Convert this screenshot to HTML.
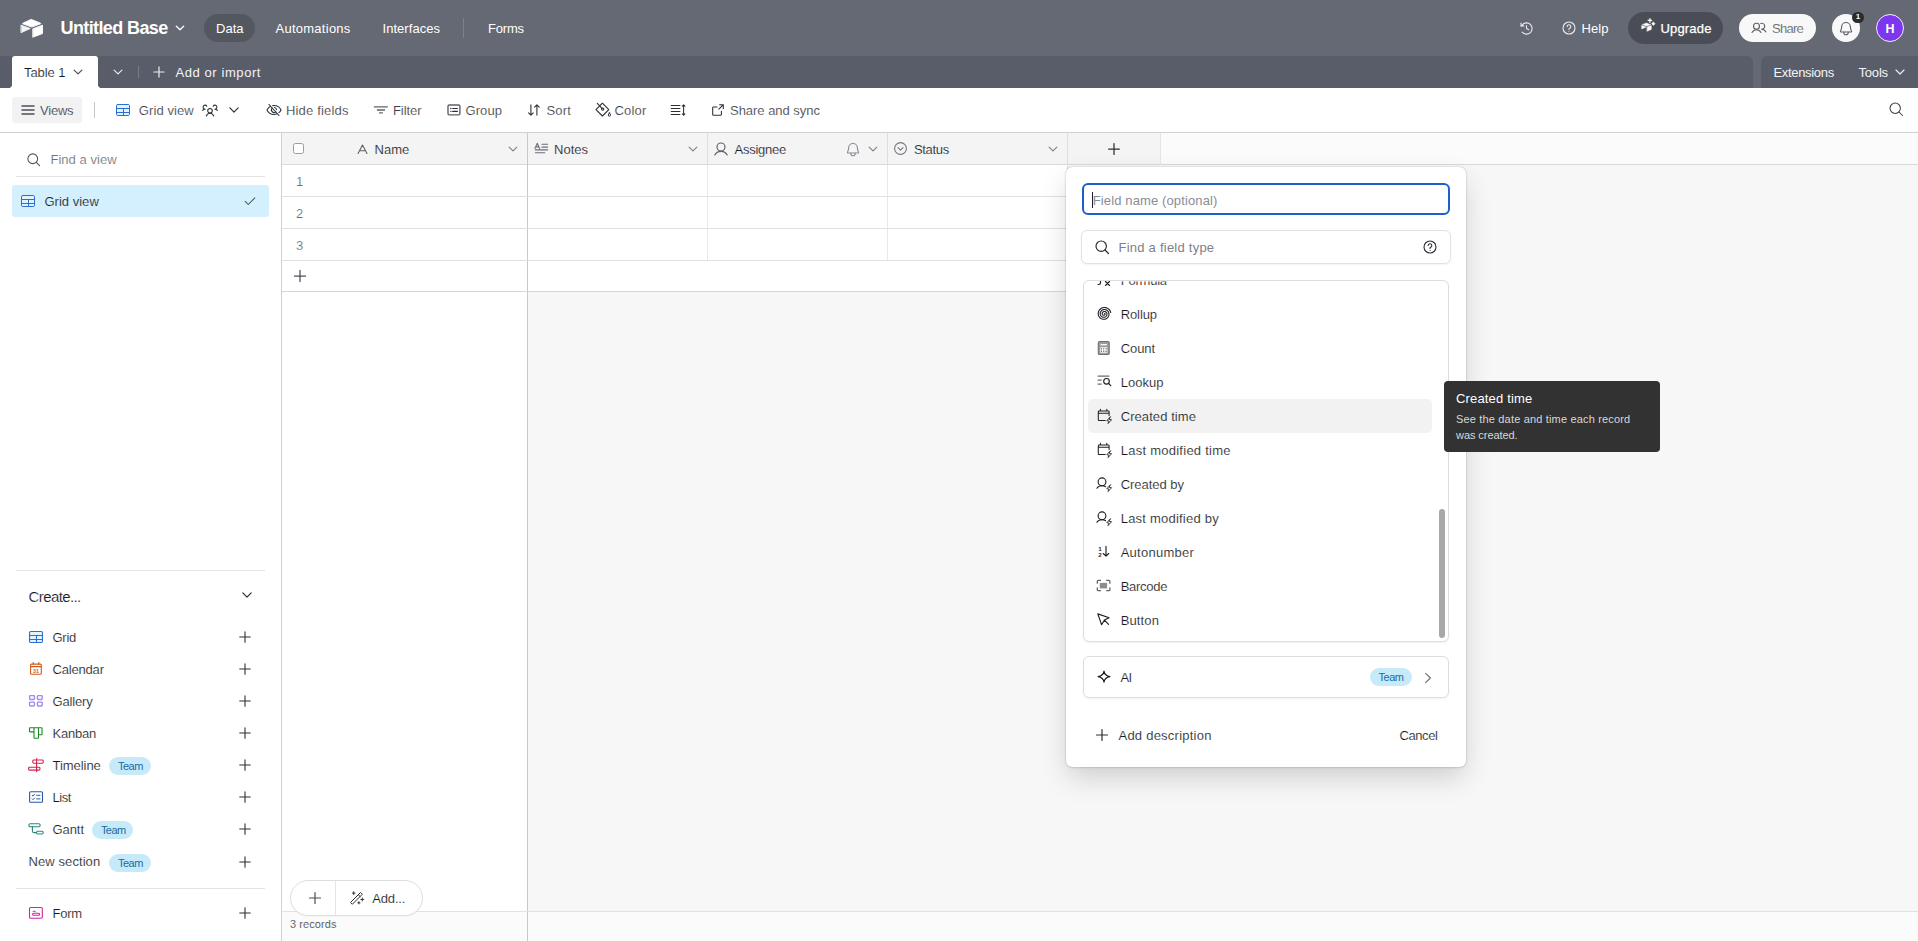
<!DOCTYPE html>
<html lang="en"><head><meta charset="utf-8"><title>Untitled Base - Airtable</title>
<style>
html,body{margin:0;padding:0;background:#fff;}
body{width:1918px;height:941px;overflow:hidden;font-family:"Liberation Sans",sans-serif;}
#app{position:relative;width:1918px;height:941px;overflow:hidden;background:#f7f7f7;}
#app div{position:absolute;box-sizing:border-box;}
.t{position:absolute;white-space:nowrap;line-height:20px;height:20px;}
.i{position:absolute;overflow:visible;stroke-linecap:round;stroke-linejoin:round;stroke-width:1.25;}

</style></head>
<body>
<div id="app">
<div style="left:0px;top:0px;width:1918px;height:88px;background:#646973;"></div>
<svg class="i" style="left:20px;top:18px;color:#ffffff;" width="24" height="20" viewBox="0 0 24 20" fill="none" stroke="currentColor"><g stroke="currentColor" stroke-width=".9" stroke-linejoin="round" fill="currentColor"><path d="M11.5 1.5 20.6 5.2c.3.12.3.5 0 .62L11.9 9.000 2.800 5.800c-.3-.12-.3-.5 0-.62z"/><path d="M13.100 10.700 22.500 7.200v8.400l-9.400 3.500z"/><path d="M1.300 7.200 10.300 10.500 1.300 14.600z" opacity=".92"/></g></svg>
<svg class="i" style="left:172px;top:20px;color:#ffffff;stroke-width:1.3" width="16" height="16" viewBox="-8 -8 16 16" fill="none" stroke="currentColor"><path d="M-3.65 -1.82L0 1.82L3.65 -1.82"/></svg>
<div style="left:204px;top:14px;width:51px;height:28px;background:rgba(0,0,0,.16);border-radius:14px;"></div>
<div style="left:463px;top:18px;width:1px;height:20px;background:rgba(255,255,255,.16);"></div>
<svg class="i" style="left:1519.2px;top:20.6px;color:#eceef0;stroke-width:1.15;" width="15" height="15" viewBox="0 0 16 16" fill="none" stroke="currentColor"><path d="M8 5v3l2.5 1.5"/><path d="M2.2 5.2v-3M2.2 5.2h3"/><path d="M3.4 11.9a6 6 0 1 0 0-7.8L2.3 5.2"/></svg>
<svg class="i" style="left:1561px;top:20px;color:#eceef0;stroke-width:1.1;" width="16" height="16" viewBox="0 0 16 16" fill="none" stroke="currentColor"><circle cx="8" cy="8" r="6"/><path d="M6.2 6.5a1.8 1.8 0 1 1 2.5 1.7c-.4.2-.7.5-.7 1v.3"/><circle cx="8" cy="11.3" r=".55" fill="currentColor" stroke="none"/></svg>
<div style="left:1628px;top:12px;width:95px;height:32px;background:rgba(0,0,0,.26);border-radius:16px;"></div>
<svg class="i" style="left:1640.8px;top:18.2px;color:#ffffff;" width="15" height="15" viewBox="0 0 16 16" fill="none" stroke="currentColor"><g stroke="currentColor" stroke-width=".5" stroke-linejoin="round" fill="currentColor"><path d="M5.900 5.400 10.200 7.100 6 8.600 1.700 7.100Z"/><path d="M6.600 9.600 11 8V12.200L6.600 14Z"/><path d="M.9 8 5.300 9.500.9 11.600Z"/><path d="M13.200 4.300 15 6.100 13.200 7.900 11.400 6.100Z"/></g><path d="M9.500 .2V5M7.100 2.600H11.900" stroke-width="1.400" stroke-linecap="butt"/></svg>
<div style="left:1738.8px;top:13.8px;width:77.5px;height:28.3px;background:#f8f8f8;border-radius:14.2px;"></div>
<svg class="i" style="left:1751.2px;top:20px;color:#5d6169;stroke-width:1.1;" width="16" height="16" viewBox="0 0 16 16" fill="none" stroke="currentColor"><circle cx="5.5" cy="6.2" r="3"/><path d="M1 12.5c1-1.8 2.6-2.8 4.5-2.8s3.500 1 4.500 2.800"/><path d="M9.700 3.400a3 3 0 1 1 .8 5.800c1.900 0 3.500 1 4.500 2.800"/></svg>
<div style="left:1831.9px;top:13.8px;width:28.2px;height:28.3px;background:#f8f8f8;border-radius:14.2px;"></div>
<svg class="i" style="left:1837.15px;top:19.3px;color:#5d6169;stroke-width:1;" width="18" height="18" viewBox="0 0 16 16" fill="none" stroke="currentColor"><path d="M3.500 11.500c-.3 0-.6-.4-.4-.7.500-.9 1-2.200 1-3.800a3.900 3.900 0 0 1 7.800 0c0 1.600.5 2.900 1 3.800.2.300-.1.700-.4.700z"/><path d="M6 11.700v.3a2 2 0 0 0 4 0v-.3"/></svg>
<div style="left:1852px;top:11.8px;width:12.1px;height:11.3px;background:#292b30;border-radius:6px;"></div>
<div style="left:1875.9px;top:13.8px;width:28.3px;height:28.3px;background:#7c37ef;border-radius:14.2px;border:1px solid #f4ecff;"></div>
<div style="left:0px;top:56px;width:1753px;height:32px;background:#585d69;border-radius:0 6px 0 0;"></div>
<div style="left:1761px;top:56px;width:157px;height:32px;background:#585d69;border-radius:6px 0 0 0;"></div>
<div style="left:12px;top:56px;width:86px;height:32px;background:#fff;border-radius:3px 3px 0 0;"></div>
<div style="left:8px;top:84px;width:4px;height:4px;background:radial-gradient(circle at 0 0,#585d69 4px,#fff 4.5px);"></div>
<div style="left:98px;top:84px;width:4px;height:4px;background:radial-gradient(circle at 100% 0,#585d69 4px,#fff 4.5px);"></div>
<svg class="i" style="left:70.1px;top:64.2px;color:#4a4f58;stroke-width:1.2" width="16" height="16" viewBox="-8 -8 16 16" fill="none" stroke="currentColor"><path d="M-3.90 -1.95L0 1.95L3.90 -1.95"/></svg>
<svg class="i" style="left:110px;top:64.2px;color:#e9eaed;stroke-width:1.2" width="16" height="16" viewBox="-8 -8 16 16" fill="none" stroke="currentColor"><path d="M-3.90 -1.95L0 1.95L3.90 -1.95"/></svg>
<div style="left:138px;top:66px;width:1px;height:12px;background:rgba(255,255,255,.2);"></div>
<svg class="i" style="left:151px;top:64px;color:#eceef0;stroke-width:1.2" width="16" height="16" viewBox="-8 -8 16 16" fill="none" stroke="currentColor"><path d="M-5.10 0H5.10M0 -5.10V5.10"/></svg>
<svg class="i" style="left:1892.1px;top:64.2px;color:#e9eaed;stroke-width:1.2" width="16" height="16" viewBox="-8 -8 16 16" fill="none" stroke="currentColor"><path d="M-4.00 -2.00L0 2.00L4.00 -2.00"/></svg>
<div style="left:0px;top:88px;width:1918px;height:44px;background:#fff;"></div>
<div style="left:0px;top:132px;width:1918px;height:1px;background:#d1d1d1;"></div>
<div style="left:12px;top:97px;width:70px;height:25.5px;background:#f2f2f2;border-radius:3px;"></div>
<svg class="i" style="left:20px;top:102px;color:#4a4f58;" width="16" height="16" viewBox="0 0 16 16" fill="none" stroke="currentColor"><path d="M2 4h12M2 8h12M2 12h12" stroke-width="1.500"/></svg>
<div style="left:94px;top:102px;width:1px;height:16px;background:#c4c6cb;"></div>
<svg class="i" style="left:115px;top:102px;color:#2a6fd6;stroke-width:1;" width="16" height="16" viewBox="0 0 16 16" fill="none" stroke="currentColor"><rect x="1.5" y="2.5" width="13" height="11" rx="1.2" fill="#e3f2ff"/><path d="M1.5 6.500H14.500M1.500 10.500H14.500M8.500 6.500V13.500"/></svg>
<svg class="i" style="left:202px;top:102px;color:#2c2f36;stroke-width:1.05;" width="16" height="16" viewBox="0 0 16 16" fill="none" stroke="currentColor"><circle cx="8" cy="8.700" r="2.300"/><path d="M4.300 14c.7-1.700 2-2.700 3.700-2.700s3 1 3.700 2.700"/><path d="M11.200 4.200a2 2 0 1 1 1.700 3c1 0 1.900.4 2.500 1.200"/><path d="M4.800 4.200a2 2 0 1 0-1.700 3c-1 0-1.900.4-2.500 1.200"/></svg>
<svg class="i" style="left:225.9px;top:102.3px;color:#2c2f36;stroke-width:1.2" width="16" height="16" viewBox="-8 -8 16 16" fill="none" stroke="currentColor"><path d="M-4.10 -2.05L0 2.05L4.10 -2.05"/></svg>
<svg class="i" style="left:266px;top:102px;color:#2c2f36;stroke-width:1.08;" width="16" height="16" viewBox="0 0 16 16" fill="none" stroke="currentColor"><path d="M3 2.500 13 13.500"/><path d="M9.700 9.800a2.500 2.500 0 0 1-3.400-3.700"/><path d="M4.600 4.300C2.100 5.600 1 8 1 8s2 4.500 7 4.500c1.200 0 2.200-.25 3.100-.65"/><path d="M13 10.600c1.400-1.200 2-2.600 2-2.600s-2-4.500-7-4.500c-.4 0-.85.030-1.250.100"/><path d="M8.500 5.550a2.500 2.500 0 0 1 2 2.200"/></svg>
<svg class="i" style="left:373px;top:102px;color:#2c2f36;stroke-width:1.08;" width="16" height="16" viewBox="0 0 16 16" fill="none" stroke="currentColor"><path d="M.9 4.800H14.800M3.900 8H12M6.100 10.900H9.800" stroke="#5d6167" stroke-width="1.350" stroke-linecap="butt"/></svg>
<svg class="i" style="left:446px;top:102px;color:#2c2f36;stroke-width:1.08;" width="16" height="16" viewBox="0 0 16 16" fill="none" stroke="currentColor"><rect x="2" y="3" width="11.900" height="9.900" rx="1.300" stroke="#5d6167" stroke-width="1.400"/><path d="M6.700 6.500H11.400M6.700 9.400H11.400" stroke-width="1.100"/><circle cx="4.900" cy="6.500" r=".7" fill="currentColor" stroke="none"/><circle cx="4.900" cy="9.400" r=".7" fill="currentColor" stroke="none"/></svg>
<svg class="i" style="left:526px;top:102px;color:#2c2f36;stroke-width:1.08;" width="16" height="16" viewBox="0 0 16 16" fill="none" stroke="currentColor"><path d="M4.900 2.900V13M2.600 10.800 4.900 13.100 7.200 10.800M10.900 13.100V3M8.600 5.200 10.900 2.900 13.200 5.200"/></svg>
<svg class="i" style="left:595px;top:102px;color:#2c2f36;stroke-width:1.08;" width="16" height="16" viewBox="0 0 16 16" fill="none" stroke="currentColor"><path d="M7.400 1.200 13.800 7.600 7.400 14 1 7.700Z"/><path d="M2.300 1.400 7 6.400"/><circle cx="7.700" cy="7.100" r="1.150"/><path d="M14.400 10.900c.7.900 1.100 1.600 1.100 2.200a1.100 1.100 0 0 1-2.200 0c0-.6.400-1.300 1.100-2.200z" stroke-width="1"/></svg>
<svg class="i" style="left:670px;top:102px;color:#2c2f36;stroke-width:1.08;" width="16" height="16" viewBox="0 0 16 16" fill="none" stroke="currentColor"><path d="M1.200 3.500H9.900M1.200 6.500H9.900M1.200 9.500H9.900M1.200 12.500H9.900M13.600 2.800V13.200M12.300 4.100 13.600 2.800 14.900 4.100M12.300 11.900 13.600 13.200 14.900 11.900"/></svg>
<svg class="i" style="left:710px;top:102px;color:#2c2f36;stroke-width:1.08;" width="16" height="16" viewBox="0 0 16 16" fill="none" stroke="currentColor"><path d="M9.600 2.700H13.300V6.400M13.300 2.700 8.900 7.100M11.400 9.300V12.400a.8.800 0 0 1-.8.800H3.500a.8.800 0 0 1-.8-.8V5.800a.8.800 0 0 1 .8-.8H7"/></svg>
<svg class="i" style="left:1887.6px;top:101.4px;color:#3a3d44;stroke-width:1.05;" width="16" height="16" viewBox="0 0 16 16" fill="none" stroke="currentColor"><circle cx="7.200" cy="7.200" r="5.200"/><path d="M11 11l3.500 3.500"/></svg>
<div style="left:0px;top:133px;width:281px;height:808px;background:#fff;"></div>
<div style="left:281px;top:133px;width:1px;height:808px;background:#d1d1d1;"></div>
<svg class="i" style="left:26.3px;top:151.5px;color:#50555e;stroke-width:1.15;" width="15" height="15" viewBox="0 0 16 16" fill="none" stroke="currentColor"><circle cx="7.200" cy="7.200" r="5.200"/><path d="M11 11l3.500 3.500"/></svg>
<div style="left:16px;top:176px;width:249px;height:1px;background:#e4e4e4;"></div>
<div style="left:12px;top:185px;width:257px;height:32px;background:#d4f0fe;border-radius:3px;"></div>
<svg class="i" style="left:20px;top:193px;color:#2a6fd6;stroke-width:1;" width="16" height="16" viewBox="0 0 16 16" fill="none" stroke="currentColor"><rect x="1.5" y="2.5" width="13" height="11" rx="1.2" fill="#e3f2ff"/><path d="M1.5 6.500H14.500M1.500 10.500H14.500M8.500 6.500V13.500"/></svg>
<svg class="i" style="left:243px;top:194px;color:#4a4f58;stroke-width:1.2;" width="14" height="14" viewBox="0 0 16 16" fill="none" stroke="currentColor"><path d="M2.5 8.5 6 12l7.5-7.5"/></svg>
<div style="left:16px;top:570px;width:249px;height:1px;background:#e4e4e4;"></div>
<svg class="i" style="left:238.7px;top:587.3px;color:#2c2f36;stroke-width:1.25" width="16" height="16" viewBox="-8 -8 16 16" fill="none" stroke="currentColor"><path d="M-4.17 -2.09L0 2.09L4.17 -2.09"/></svg>
<svg class="i" style="left:28px;top:629px;color:#2a6fd6;stroke-width:1.1;" width="16" height="16" viewBox="0 0 16 16" fill="none" stroke="currentColor"><rect x="1.5" y="2.5" width="13" height="11" rx="1.2" fill="#e3f2ff"/><path d="M1.5 6.500H14.500M1.500 10.500H14.500M8.500 6.500V13.500"/></svg>
<svg class="i" style="left:237px;top:629px;color:#2c2f36;stroke-width:1.1" width="16" height="16" viewBox="-8 -8 16 16" fill="none" stroke="currentColor"><path d="M-5.25 0H5.25M0 -5.25V5.25"/></svg>
<svg class="i" style="left:28px;top:661px;color:#cf5a1c;stroke-width:1.1;" width="16" height="16" viewBox="0 0 16 16" fill="none" stroke="currentColor"><rect x="2.600" y="3.100" width="10.700" height="10.100" rx="1"/><path d="M2.600 5.600H13.300M5.200 1.500V3.100M10.800 1.500V3.100"/><text x="8" y="11.700" text-anchor="middle" font-family="Liberation Sans,sans-serif" font-size="5.200" font-weight="700" fill="currentColor" stroke="none">31</text></svg>
<svg class="i" style="left:237px;top:661px;color:#2c2f36;stroke-width:1.1" width="16" height="16" viewBox="-8 -8 16 16" fill="none" stroke="currentColor"><path d="M-5.25 0H5.25M0 -5.25V5.25"/></svg>
<svg class="i" style="left:28px;top:693px;color:#8a57ee;stroke-width:1.1;" width="16" height="16" viewBox="0 0 16 16" fill="none" stroke="currentColor"><g stroke-width="1.4" stroke="#a68af4"><rect x="1.6" y="2.6" width="4.8" height="3.9" rx=".7"/><rect x="9.4" y="2.6" width="4.8" height="3.9" rx=".7"/><rect x="1.6" y="9.1" width="4.8" height="3.9" rx=".7"/><rect x="9.4" y="9.1" width="4.8" height="3.9" rx=".7"/></g></svg>
<svg class="i" style="left:237px;top:693px;color:#2c2f36;stroke-width:1.1" width="16" height="16" viewBox="-8 -8 16 16" fill="none" stroke="currentColor"><path d="M-5.25 0H5.25M0 -5.25V5.25"/></svg>
<svg class="i" style="left:28px;top:725px;color:#198a25;stroke-width:1.1;" width="16" height="16" viewBox="0 0 16 16" fill="none" stroke="currentColor"><path d="M2.1 2.7H13.400a.6.600 0 0 1 .6.600V9.200a.6.600 0 0 1-.6.600H10.500V12.700a.6.600 0 0 1-.6.600H6.600a.6.600 0 0 1-.6-.6V6.900H2.100a.6.600 0 0 1-.6-.6V3.300a.6.600 0 0 1 .6-.6zM6 2.700V6.900M10.500 2.700V9.800"/></svg>
<svg class="i" style="left:237px;top:725px;color:#2c2f36;stroke-width:1.1" width="16" height="16" viewBox="-8 -8 16 16" fill="none" stroke="currentColor"><path d="M-5.25 0H5.25M0 -5.25V5.25"/></svg>
<svg class="i" style="left:28px;top:757px;color:#d5204f;stroke-width:1.1;" width="16" height="16" viewBox="0 0 16 16" fill="none" stroke="currentColor"><path d="M8.600 1.500V14.800"/><rect x="4.800" y="3" width="10.400" height="3.200" rx=".9"/><rect x=".6" y="10.200" width="11.300" height="2.900" rx=".9"/></svg>
<div style="left:109.1px;top:757.25px;width:41.5px;height:17.5px;background:#c7eafb;border-radius:9px;"></div>
<svg class="i" style="left:237px;top:757px;color:#2c2f36;stroke-width:1.1" width="16" height="16" viewBox="-8 -8 16 16" fill="none" stroke="currentColor"><path d="M-5.25 0H5.25M0 -5.25V5.25"/></svg>
<svg class="i" style="left:28px;top:789px;color:#2759a8;stroke-width:1.1;" width="16" height="16" viewBox="0 0 16 16" fill="none" stroke="currentColor"><rect x="1.600" y="2.800" width="12.900" height="10.400" rx="1"/><path d="M8.700 6.300h3.300M8.700 9.900h3.300M4.200 6.300l.8.800 1.500-1.600M4.200 9.900l.8.800 1.500-1.600" stroke-width="1"/></svg>
<svg class="i" style="left:237px;top:789px;color:#2c2f36;stroke-width:1.1" width="16" height="16" viewBox="-8 -8 16 16" fill="none" stroke="currentColor"><path d="M-5.25 0H5.25M0 -5.25V5.25"/></svg>
<svg class="i" style="left:28px;top:821px;color:#23897a;stroke-width:1.1;" width="16" height="16" viewBox="0 0 16 16" fill="none" stroke="currentColor"><rect x=".9" y="2.800" width="11.200" height="3" rx="1.200"/><rect x="8.500" y="10.200" width="6.700" height="2.800" rx="1.200"/><path d="M4.400 5.800v4.300a1.500 1.500 0 0 0 1.500 1.500h2.600"/></svg>
<div style="left:91.9px;top:821.25px;width:41.5px;height:17.5px;background:#c7eafb;border-radius:9px;"></div>
<svg class="i" style="left:237px;top:821px;color:#2c2f36;stroke-width:1.1" width="16" height="16" viewBox="-8 -8 16 16" fill="none" stroke="currentColor"><path d="M-5.25 0H5.25M0 -5.25V5.25"/></svg>
<div style="left:109.1px;top:854.25px;width:41.5px;height:17.5px;background:#c7eafb;border-radius:9px;"></div>
<svg class="i" style="left:237px;top:854px;color:#2c2f36;stroke-width:1.1" width="16" height="16" viewBox="-8 -8 16 16" fill="none" stroke="currentColor"><path d="M-5.25 0H5.25M0 -5.25V5.25"/></svg>
<svg class="i" style="left:28px;top:905px;color:#d322a4;stroke-width:1.1;" width="16" height="16" viewBox="0 0 16 16" fill="none" stroke="currentColor"><rect x="1.5" y="2.5" width="12.8" height="10.8" rx="1.2"/><path d="M5.100 6.200H7.300"/><rect x="4.600" y="8.300" width="7" height="2" rx="1"/></svg>
<svg class="i" style="left:237px;top:905px;color:#2c2f36;stroke-width:1.1" width="16" height="16" viewBox="-8 -8 16 16" fill="none" stroke="currentColor"><path d="M-5.25 0H5.25M0 -5.25V5.25"/></svg>
<div style="left:16px;top:888px;width:249px;height:1px;background:#e4e4e4;"></div>
<div style="left:282px;top:133px;width:1636px;height:32px;background:#fbfbfb;"></div>
<div style="left:282px;top:133px;width:879px;height:31px;background:#f4f4f4;"></div>
<div style="left:282px;top:164px;width:1636px;height:1px;background:#d9d9d9;"></div>
<div style="left:282px;top:165px;width:246px;height:776px;background:#fff;"></div>
<div style="left:528px;top:165px;width:540px;height:127px;background:#fff;"></div>
<div style="left:527px;top:133px;width:1px;height:808px;background:#c8c8c8;"></div>
<div style="left:707px;top:133px;width:1px;height:32px;background:#dedede;"></div>
<div style="left:707px;top:165px;width:1px;height:96px;background:#e8e8e8;"></div>
<div style="left:887px;top:133px;width:1px;height:32px;background:#dedede;"></div>
<div style="left:887px;top:165px;width:1px;height:96px;background:#e8e8e8;"></div>
<div style="left:1067px;top:133px;width:1px;height:159px;background:#dedede;"></div>
<div style="left:1160px;top:133px;width:1px;height:32px;background:#e6e6e6;"></div>
<div style="left:282px;top:196px;width:786px;height:1px;background:#e0e0e0;"></div>
<div style="left:282px;top:228px;width:786px;height:1px;background:#e0e0e0;"></div>
<div style="left:282px;top:260px;width:786px;height:1px;background:#e0e0e0;"></div>
<div style="left:282px;top:291px;width:786px;height:1px;background:#d6d6d6;"></div>
<div style="left:293px;top:143px;width:11px;height:11px;background:#fff;border:1px solid #9a9da3;border-radius:2.5px;"></div>
<svg class="i" style="left:355.5px;top:142.6px;color:#5b5f66;stroke-width:1.3;" width="13" height="13" viewBox="0 0 16 16" fill="none" stroke="currentColor"><path d="M2.500 13 8 2.500 13.500 13M4.300 9.500h7.400"/></svg>
<svg class="i" style="left:504.9px;top:140.8px;color:#7d8087;stroke-width:1.1" width="16" height="16" viewBox="-8 -8 16 16" fill="none" stroke="currentColor"><path d="M-3.85 -1.93L0 1.93L3.85 -1.93"/></svg>
<svg class="i" style="left:533.5px;top:141.3px;color:#6a6e75;stroke-width:1.15;" width="15" height="15" viewBox="0 0 16 16" fill="none" stroke="currentColor"><path d="M1 8 3.500 2.500 6 8M1.800 6.300h3.400M8.500 3.500h6M8.500 6.500h6M1.500 9.500h13M1.500 12.500h10"/></svg>
<svg class="i" style="left:684.5px;top:140.8px;color:#7d8087;stroke-width:1.1" width="16" height="16" viewBox="-8 -8 16 16" fill="none" stroke="currentColor"><path d="M-3.85 -1.93L0 1.93L3.85 -1.93"/></svg>
<svg class="i" style="left:712.9px;top:140.9px;color:#5b5f66;stroke-width:1.15;" width="16" height="16" viewBox="0 0 16 16" fill="none" stroke="currentColor"><circle cx="8" cy="6" r="4"/><path d="M1.800 14c1.300-2.500 3.500-3.700 6.200-3.700s4.900 1.200 6.200 3.700"/></svg>
<svg class="i" style="left:843.9px;top:139.5px;color:#8a8d93;stroke-width:1;" width="18" height="18" viewBox="0 0 16 16" fill="none" stroke="currentColor"><path d="M3.500 11.500c-.3 0-.6-.4-.4-.7.500-.9 1-2.200 1-3.800a3.900 3.900 0 0 1 7.800 0c0 1.600.5 2.900 1 3.800.2.300-.1.700-.4.700z"/><path d="M6 11.700v.3a2 2 0 0 0 4 0v-.3"/></svg>
<svg class="i" style="left:865px;top:140.8px;color:#7d8087;stroke-width:1.1" width="16" height="16" viewBox="-8 -8 16 16" fill="none" stroke="currentColor"><path d="M-3.85 -1.93L0 1.93L3.85 -1.93"/></svg>
<svg class="i" style="left:893.25px;top:141.4px;color:#73777e;stroke-width:1.15;" width="15" height="15" viewBox="0 0 16 16" fill="none" stroke="currentColor"><circle cx="8" cy="8" r="6.300"/><path d="M5.300 7 8 9.700 10.700 7"/></svg>
<svg class="i" style="left:1044.5px;top:140.8px;color:#7d8087;stroke-width:1.1" width="16" height="16" viewBox="-8 -8 16 16" fill="none" stroke="currentColor"><path d="M-3.85 -1.93L0 1.93L3.85 -1.93"/></svg>
<svg class="i" style="left:1105.7px;top:141px;color:#2c2f36;stroke-width:1.25" width="16" height="16" viewBox="-8 -8 16 16" fill="none" stroke="currentColor"><path d="M-5.38 0H5.38M0 -5.38V5.38"/></svg>
<svg class="i" style="left:292px;top:267.5px;color:#4a4f58;stroke-width:1.25" width="16" height="16" viewBox="-8 -8 16 16" fill="none" stroke="currentColor"><path d="M-5.58 0H5.58M0 -5.58V5.58"/></svg>
<div style="left:282px;top:911px;width:1636px;height:1px;background:#e2e2e2;"></div>
<div style="left:282px;top:912px;width:245px;height:29px;background:#fbfbfb;"></div>
<div style="left:528px;top:912px;width:1390px;height:29px;background:#fbfbfb;"></div>
<div style="left:290.3px;top:880px;width:132.7px;height:35.7px;background:#fff;border:1px solid #dedede;border-radius:18px;box-shadow:0 1px 2px rgba(0,0,0,.03);"></div>
<div style="left:335px;top:881px;width:1px;height:34px;background:#e4e4e4;"></div>
<svg class="i" style="left:306.9px;top:889.9px;color:#4a4d53;stroke-width:1.2" width="16" height="16" viewBox="-8 -8 16 16" fill="none" stroke="currentColor"><path d="M-5.50 0H5.50M0 -5.50V5.50"/></svg>
<svg class="i" style="left:348.5px;top:890px;color:#2c2f36;" width="16" height="16" viewBox="0 0 16 16" fill="none" stroke="currentColor"><path d="M1.800 12.200 11.600 2.400 13.400 4.200 3.600 14ZM9.300 4.700 11.100 6.500" stroke-width="1"/><path d="M4.700 1.700V4.500M3.300 3.100H6.100M13.300 8V11M11.800 9.500H14.800M9.900 11.700V13.900M8.800 12.800H11" stroke-width=".95"/></svg>
<div style="left:1066px;top:167px;width:400px;height:600px;background:#fff;border-radius:6px;box-shadow:0 0 1px rgba(0,0,0,.32),0 0 2px rgba(0,0,0,.08),0 1px 3px rgba(0,0,0,.08),0 12px 28px -2px rgba(0,0,0,.17);"></div>
<div style="left:1082px;top:183px;width:368px;height:32px;background:#fff;border:2px solid #1b61c9;border-radius:6px;"></div>
<div style="left:1092px;top:191.5px;width:1px;height:16.5px;background:#1d1f25;"></div>
<div style="left:1081px;top:230px;width:370px;height:34px;background:#fff;border:1px solid #e0e2e5;border-radius:6px;box-shadow:0 1px 2px rgba(0,0,0,.05);"></div>
<svg class="i" style="left:1094px;top:239px;color:#2c2f36;stroke-width:1.2;" width="16" height="16" viewBox="0 0 16 16" fill="none" stroke="currentColor"><circle cx="7.200" cy="7.200" r="5.200"/><path d="M11 11l3.500 3.500"/></svg>
<svg class="i" style="left:1422.3px;top:239px;color:#2c2f36;stroke-width:1.1;" width="16" height="16" viewBox="0 0 16 16" fill="none" stroke="currentColor"><circle cx="8" cy="8" r="6"/><path d="M6.2 6.5a1.8 1.8 0 1 1 2.5 1.7c-.4.2-.7.5-.7 1v.3"/><circle cx="8" cy="11.3" r=".55" fill="currentColor" stroke="none"/></svg>
<div style="left:1083px;top:280px;width:366px;height:362px;background:#fff;border:1px solid #dcdee2;border-radius:6px;box-shadow:0 1px 2px rgba(0,0,0,.06);"></div>
<div style="left:1088px;top:399px;width:344px;height:34px;background:#f2f2f2;border-radius:5px;"></div>
<div style="left:1439px;top:509px;width:6px;height:129px;background:#a8a8a8;border-radius:3px;"></div>
<svg class="i" style="left:1095.8px;top:272.3px;color:#1d1f25;stroke-width:1.12;clip-path:inset(8.7px 0 0 0);" width="16" height="16" viewBox="0 0 16 16" fill="none" stroke="currentColor"><path d="M7.500 2.500H6.200a1.700 1.700 0 0 0-1.700 1.700v6.600A1.700 1.700 0 0 1 2.800 12.500H2M2.500 7h4.500M9.500 9.500l4 4M13.500 9.500l-4 4"/></svg>
<svg class="i" style="left:1095.8px;top:306.3px;color:#1d1f25;stroke-width:1.12;" width="16" height="16" viewBox="0 0 16 16" fill="none" stroke="currentColor"><path d="M8.50 7.45 8.59 7.48 8.67 7.53 8.75 7.59 8.83 7.66 8.89 7.75 8.95 7.85 8.99 7.96 9.01 8.09 9.02 8.22 9.01 8.35 8.98 8.49 8.92 8.62 8.85 8.75 8.76 8.88 8.64 8.99 8.51 9.09 8.36 9.18 8.20 9.24 8.02 9.28 7.83 9.30 7.64 9.29 7.45 9.26 7.25 9.20 7.06 9.11 6.89 8.99 6.72 8.85 6.57 8.68 6.45 8.49 6.34 8.28 6.27 8.05 6.22 7.81 6.21 7.56 6.23 7.31 6.28 7.05 6.37 6.80 6.50 6.56 6.66 6.34 6.85 6.13 7.07 5.94 7.31 5.79 7.59 5.66 7.88 5.57 8.18 5.52 8.49 5.51 8.81 5.54 9.13 5.62 9.44 5.74 9.73 5.90 10.01 6.09 10.26 6.33 10.48 6.61 10.66 6.91 10.81 7.24 10.92 7.59 10.97 7.96 10.98 8.34 10.94 8.72 10.85 9.10 10.71 9.46 10.51 9.81 10.27 10.14 9.99 10.44 9.67 10.69 9.31 10.91 8.92 11.08 8.50 11.20 8.07 11.27 7.63 11.28 7.19 11.23 6.75 11.12 6.32 10.95 5.91 10.73 5.54 10.45 5.20 10.12 4.90 9.75 4.64 9.34 4.45 8.89 4.31 8.41 4.23 7.92 4.22 7.41 4.28 6.90 4.40 6.40 4.59 5.91 4.85 5.45 5.16 5.02 5.53 4.63 5.96 4.29 6.43 4.01 6.93 3.78 7.47 3.63 8.03 3.54 8.60 3.53 9.17 3.59 9.73 3.72 10.28 3.93 10.80 4.22 11.28 4.57 11.72 4.98 12.10 5.45 12.42 5.97 12.68 6.54 12.86 7.14 12.96 7.76 12.97 8.39 12.91 9.03 12.76 9.66 12.53 10.26 12.22 10.84 11.84 11.38 11.38 11.87 10.86 12.29 10.29 12.65 9.67 12.93 9.01 13.13 8.32 13.25 7.63 13.27 6.93 13.21 6.23 13.05 5.56 12.80 4.93 12.47 4.33 12.05 3.80 11.55 3.33 10.99 2.93 10.36 2.62 9.68 2.39 8.96 2.26 8.22 2.23 7.46 2.29 6.69 2.46 5.94 2.72 5.20 3.08 4.51 3.53 3.86 4.07 3.27 4.68 2.75 5.36 2.32 6.09 1.97 6.87 1.72 7.68 1.57 8.50 1.53 9.33 1.59 10.15 1.76 10.95 2.04 11.70 2.43 12.41 2.91 13.05 3.48 13.61 4.14 14.09 4.86 14.47 5.65 14.75 6.49" stroke-width="1.1"/></svg>
<svg class="i" style="left:1095.8px;top:340.3px;color:#1d1f25;stroke-width:1.12;" width="16" height="16" viewBox="0 0 16 16" fill="none" stroke="currentColor"><rect x="2.3" y="1.5" width="10.9" height="13" rx="1.3" fill="#9a9ca0" stroke="#6d7076" stroke-width="1.1"/><rect x="4.6" y="4" width="6.3" height="1.3" fill="#fff" stroke="none"/><rect x="4.2" y="7.3" width="7.1" height="5.4" fill="#fff" stroke="none"/><g fill="#3a3d44" stroke="none"><circle cx="5.4" cy="8.8" r=".65"/><circle cx="7.75" cy="8.8" r=".65"/><circle cx="10.1" cy="8.8" r=".65"/><circle cx="5.4" cy="11.2" r=".65"/><circle cx="7.75" cy="11.2" r=".65"/><circle cx="10.1" cy="11.2" r=".65"/></g></svg>
<svg class="i" style="left:1095.8px;top:374.3px;color:#1d1f25;stroke-width:1.12;" width="16" height="16" viewBox="0 0 16 16" fill="none" stroke="currentColor"><path d="M1.6 2.2H13.4M1.6 6.1H5.7M1.6 10.1H5.7" stroke="#6a6d73" stroke-width="1.3" stroke-linecap="butt"/><circle cx="10.5" cy="7.3" r="2.8" stroke-width="1.15"/><path d="M12.6 9.5 14.8 11.7" stroke-width="1.15"/></svg>
<svg class="i" style="left:1095.8px;top:408.3px;color:#1d1f25;stroke-width:1.12;" width="16" height="16" viewBox="0 0 16 16" fill="none" stroke="currentColor"><path d="M9.200 12.500H3.100a.8.800 0 0 1-.8-.8V3.700a.8.800 0 0 1 .8-.8h9.200a.8.800 0 0 1 .8.800v3.900M2.300 5.200H13.100M4.400 1.300V2.900M10.800 1.300V2.900" stroke-width="1.050"/><path d="M14.300 8.900 10.800 12.700 13 13.100 12 15.600 15.600 11.700 13.400 11.300Z" stroke-width=".85"/></svg>
<svg class="i" style="left:1095.8px;top:442.3px;color:#1d1f25;stroke-width:1.12;" width="16" height="16" viewBox="0 0 16 16" fill="none" stroke="currentColor"><path d="M9.200 12.500H3.100a.8.800 0 0 1-.8-.8V3.700a.8.800 0 0 1 .8-.8h9.200a.8.800 0 0 1 .8.800v3.900M2.300 5.200H13.100M4.400 1.300V2.900M10.800 1.300V2.900" stroke-width="1.050"/><path d="M14.300 8.900 10.800 12.700 13 13.100 12 15.600 15.600 11.700 13.400 11.300Z" stroke-width=".85"/></svg>
<svg class="i" style="left:1095.8px;top:476.3px;color:#1d1f25;stroke-width:1.12;" width="16" height="16" viewBox="0 0 16 16" fill="none" stroke="currentColor"><circle cx="6" cy="5.8" r="3.9"/><path d="M.9 12.2C2 10.4 3.8 9.7 6 9.7c1.400 0 2.600.3 3.600 1"/><path d="M14.300 8.900 10.800 12.700 13 13.100 12 15.600 15.600 11.700 13.400 11.300Z" stroke-width=".85"/></svg>
<svg class="i" style="left:1095.8px;top:510.29999999999995px;color:#1d1f25;stroke-width:1.12;" width="16" height="16" viewBox="0 0 16 16" fill="none" stroke="currentColor"><circle cx="6" cy="5.8" r="3.9"/><path d="M.9 12.2C2 10.4 3.8 9.7 6 9.7c1.400 0 2.600.3 3.600 1"/><path d="M14.300 8.900 10.800 12.700 13 13.100 12 15.600 15.600 11.700 13.400 11.300Z" stroke-width=".85"/></svg>
<svg class="i" style="left:1095.8px;top:544.3px;color:#1d1f25;stroke-width:1.12;" width="16" height="16" viewBox="0 0 16 16" fill="none" stroke="currentColor"><path d="M10 2.400V12.100M7.300 9.500 10 12.200 12.700 9.500"/><text x="2.300" y="7.100" font-family="Liberation Sans,sans-serif" font-size="6.200" font-weight="700" fill="currentColor" stroke="none">1</text><text x="2.300" y="12.700" font-family="Liberation Sans,sans-serif" font-size="6.200" font-weight="700" fill="currentColor" stroke="none">2</text></svg>
<svg class="i" style="left:1095.8px;top:578.3px;color:#1d1f25;stroke-width:1.12;" width="16" height="16" viewBox="0 0 16 16" fill="none" stroke="currentColor"><path d="M1.300 5.200V3.400a1 1 0 0 1 1-1h2.200M10.700 2.400h2.200a1 1 0 0 1 1 1v1.800M13.900 9.900v1.800a1 1 0 0 1-1 1h-2.200M4.500 12.700H2.300a1 1 0 0 1-1-1V9.900" stroke="#63666c" stroke-width="1.300"/><rect x="3.800" y="4.900" width="7.300" height="5.500" fill="#8b8d91" stroke="none"/></svg>
<svg class="i" style="left:1095.8px;top:612.3px;color:#1d1f25;stroke-width:1.12;" width="16" height="16" viewBox="0 0 16 16" fill="none" stroke="currentColor"><path d="M1.800 1.900 13.100 5.700 8.400 8.100 5.600 12.700ZM8.400 8.100 12.600 12.300"/></svg>
<div style="left:1083px;top:656px;width:366px;height:42px;background:#fff;border:1px solid #dcdee2;border-radius:6px;box-shadow:0 1px 2px rgba(0,0,0,.05);"></div>
<svg class="i" style="left:1096px;top:669.2px;color:#16181d;stroke-width:1.15;" width="16" height="16" viewBox="0 0 16 16" fill="none" stroke="currentColor"><path d="M8 2.100C8.500 5.400 10.300 7 13.900 7.600 10.300 8.200 8.500 9.800 8 13.100 7.500 9.800 5.700 8.200 2.100 7.600 5.700 7 7.500 5.400 8 2.100Z"/></svg>
<div style="left:1370px;top:668.2px;width:42px;height:17.5px;background:#c7eafb;border-radius:9px;"></div>
<svg class="i" style="left:1419.9px;top:669.5px;color:#6a6e76;stroke-width:1.1" width="16" height="16" viewBox="-8 -8 16 16" fill="none" stroke="currentColor"><path d="M-2.33 -4.65L2.33 0L-2.33 4.65"/></svg>
<svg class="i" style="left:1094.2px;top:727.3px;color:#2c2f36;stroke-width:1.2" width="16" height="16" viewBox="-8 -8 16 16" fill="none" stroke="currentColor"><path d="M-5.50 0H5.50M0 -5.50V5.50"/></svg>
<div style="left:1444px;top:381px;width:216px;height:71px;background:#323232;border-radius:4px;"></div>
<span class="t" id="t0" style="left:60.5px;top:18.01px;font-size:18px;color:#ffffff;font-weight:700;letter-spacing:-0.603px;">Untitled Base</span>
<span class="t" id="t1" style="left:216px;top:18.75px;font-size:13px;color:#ffffff;letter-spacing:0.009px;">Data</span>
<span class="t" id="t2" style="left:275.5px;top:18.75px;font-size:13px;color:#ffffff;letter-spacing:0.260px;">Automations</span>
<span class="t" id="t3" style="left:382.5px;top:18.75px;font-size:13px;color:#ffffff;letter-spacing:0.043px;">Interfaces</span>
<span class="t" id="t4" style="left:488px;top:18.75px;font-size:13px;color:#ffffff;letter-spacing:-0.188px;">Forms</span>
<span class="t" id="t5" style="left:1581.5px;top:18.75px;font-size:13px;color:#ffffff;letter-spacing:0.071px;">Help</span>
<span class="t" id="t6" style="left:1660.5px;top:18.75px;font-size:13px;color:#ffffff;letter-spacing:0.173px;-webkit-text-stroke:.25px #fff;">Upgrade</span>
<span class="t" id="t7" style="left:1772px;top:18.75px;font-size:13px;color:#555961;letter-spacing:-0.712px;-webkit-text-stroke:0.16px #f8f8f8;">Share</span>
<span class="t" id="t8" style="left:1855.8px;top:7.48px;font-size:8px;color:#ffffff;font-weight:700;">1</span>
<span class="t" id="t9" style="left:1885.5px;top:18.92px;font-size:12.5px;color:#ffffff;font-weight:700;">H</span>
<span class="t" id="t10" style="left:24px;top:62.75px;font-size:13px;color:#16181d;letter-spacing:-0.065px;-webkit-text-stroke:0.16px #fff;">Table 1</span>
<span class="t" id="t11" style="left:175.4px;top:62.75px;font-size:13px;color:#f3f4f6;letter-spacing:0.588px;">Add or import</span>
<span class="t" id="t12" style="left:1773.5px;top:62.75px;font-size:13px;color:#f3f4f6;letter-spacing:-0.326px;">Extensions</span>
<span class="t" id="t13" style="left:1858.5px;top:62.75px;font-size:13px;color:#f3f4f6;letter-spacing:-0.191px;">Tools</span>
<span class="t" id="t14" style="left:40px;top:100.75px;font-size:13px;color:#393c43;letter-spacing:-0.212px;-webkit-text-stroke:0.16px #f2f2f2;">Views</span>
<span class="t" id="t15" style="left:138.8px;top:100.75px;font-size:13px;color:#393c43;letter-spacing:0.096px;-webkit-text-stroke:0.16px #fff;">Grid view</span>
<span class="t" id="t16" style="left:286px;top:100.75px;font-size:13px;color:#393c43;letter-spacing:0.171px;-webkit-text-stroke:0.16px #fff;">Hide fields</span>
<span class="t" id="t17" style="left:393px;top:100.75px;font-size:13px;color:#393c43;letter-spacing:-0.071px;-webkit-text-stroke:0.16px #fff;">Filter</span>
<span class="t" id="t18" style="left:465.5px;top:100.75px;font-size:13px;color:#393c43;letter-spacing:0.080px;-webkit-text-stroke:0.16px #fff;">Group</span>
<span class="t" id="t19" style="left:546.5px;top:100.75px;font-size:13px;color:#393c43;letter-spacing:0.188px;-webkit-text-stroke:0.16px #fff;">Sort</span>
<span class="t" id="t20" style="left:614.5px;top:100.75px;font-size:13px;color:#393c43;letter-spacing:0.205px;-webkit-text-stroke:0.16px #fff;">Color</span>
<span class="t" id="t21" style="left:730px;top:100.75px;font-size:13px;color:#393c43;letter-spacing:-0.025px;-webkit-text-stroke:0.16px #fff;">Share and sync</span>
<span class="t" id="t22" style="left:50.4px;top:149.75px;font-size:13px;color:#6b6f77;letter-spacing:0.052px;-webkit-text-stroke:0.16px #fff;">Find a view</span>
<span class="t" id="t23" style="left:44.4px;top:191.75px;font-size:13px;color:#16181d;letter-spacing:0.025px;-webkit-text-stroke:0.16px #d4f0fe;">Grid view</span>
<span class="t" id="t24" style="left:28.5px;top:587.05px;font-size:15px;color:#16181d;letter-spacing:-0.592px;-webkit-text-stroke:0.16px #fff;">Create...</span>
<span class="t" id="t25" style="left:52.5px;top:627.75px;font-size:13px;color:#16181d;letter-spacing:-0.275px;-webkit-text-stroke:0.16px #fff;">Grid</span>
<span class="t" id="t26" style="left:52.5px;top:659.75px;font-size:13px;color:#16181d;letter-spacing:-0.182px;-webkit-text-stroke:0.16px #fff;">Calendar</span>
<span class="t" id="t27" style="left:52.5px;top:691.75px;font-size:13px;color:#16181d;letter-spacing:-0.152px;-webkit-text-stroke:0.16px #fff;">Gallery</span>
<span class="t" id="t28" style="left:52.5px;top:723.75px;font-size:13px;color:#16181d;letter-spacing:-0.241px;-webkit-text-stroke:0.16px #fff;">Kanban</span>
<span class="t" id="t29" style="left:52.5px;top:755.75px;font-size:13px;color:#16181d;letter-spacing:-0.048px;-webkit-text-stroke:0.16px #fff;">Timeline</span>
<span class="t" id="t30" style="left:118.1px;top:756.44px;font-size:11px;color:#1a6a9e;letter-spacing:-0.545px;">Team</span>
<span class="t" id="t31" style="left:52.5px;top:787.75px;font-size:13px;color:#16181d;letter-spacing:-0.467px;-webkit-text-stroke:0.16px #fff;">List</span>
<span class="t" id="t32" style="left:52.5px;top:819.75px;font-size:13px;color:#16181d;letter-spacing:-0.066px;-webkit-text-stroke:0.16px #fff;">Gantt</span>
<span class="t" id="t33" style="left:100.9px;top:820.44px;font-size:11px;color:#1a6a9e;letter-spacing:-0.545px;">Team</span>
<span class="t" id="t34" style="left:28.6px;top:851.75px;font-size:13px;color:#16181d;letter-spacing:0.075px;-webkit-text-stroke:0.16px #fff;">New section</span>
<span class="t" id="t35" style="left:118.1px;top:853.44px;font-size:11px;color:#1a6a9e;letter-spacing:-0.545px;">Team</span>
<span class="t" id="t36" style="left:52.5px;top:903.75px;font-size:13px;color:#16181d;letter-spacing:-0.241px;-webkit-text-stroke:0.16px #fff;">Form</span>
<span class="t" id="t37" style="left:374.5px;top:139.75px;font-size:13px;color:#16181d;letter-spacing:0.004px;-webkit-text-stroke:0.16px #f4f4f4;">Name</span>
<span class="t" id="t38" style="left:554px;top:139.75px;font-size:13px;color:#16181d;letter-spacing:0.007px;-webkit-text-stroke:0.16px #f4f4f4;">Notes</span>
<span class="t" id="t39" style="left:734.5px;top:139.75px;font-size:13px;color:#16181d;letter-spacing:-0.265px;-webkit-text-stroke:0.16px #f4f4f4;">Assignee</span>
<span class="t" id="t40" style="left:914px;top:139.75px;font-size:13px;color:#16181d;letter-spacing:-0.338px;-webkit-text-stroke:0.16px #f4f4f4;">Status</span>
<span class="t" id="t41" style="left:296px;top:171.75px;font-size:13px;color:#6a6e76;-webkit-text-stroke:0.16px #fff;">1</span>
<span class="t" id="t42" style="left:296px;top:203.75px;font-size:13px;color:#6a6e76;-webkit-text-stroke:0.16px #fff;">2</span>
<span class="t" id="t43" style="left:296px;top:235.75px;font-size:13px;color:#6a6e76;-webkit-text-stroke:0.16px #fff;">3</span>
<span class="t" id="t44" style="left:290px;top:914.44px;font-size:11px;color:#393c43;letter-spacing:0.075px;-webkit-text-stroke:0.16px #fbfbfb;">3 records</span>
<span class="t" id="t45" style="left:372.2px;top:888.75px;font-size:13px;color:#16181d;letter-spacing:-0.140px;-webkit-text-stroke:0.16px #fff;">Add...</span>
<span class="t" id="t46" style="left:1092.8px;top:190.75px;font-size:13px;color:#898d94;letter-spacing:0.121px;">Field name (optional)</span>
<span class="t" id="t47" style="left:1118.5px;top:237.75px;font-size:13px;color:#7d8188;letter-spacing:0.238px;">Find a field type</span>
<span class="t" id="t48" style="left:1120.7px;top:270.75px;font-size:13px;color:#16181d;letter-spacing:-0.213px;-webkit-text-stroke:0.16px #fff;clip-path:inset(10.8px 0 0 0);">Formula</span>
<span class="t" id="t49" style="left:1120.7px;top:304.75px;font-size:13px;color:#16181d;letter-spacing:-0.102px;-webkit-text-stroke:0.16px #fff;">Rollup</span>
<span class="t" id="t50" style="left:1120.7px;top:338.75px;font-size:13px;color:#16181d;letter-spacing:-0.090px;-webkit-text-stroke:0.16px #fff;">Count</span>
<span class="t" id="t51" style="left:1120.7px;top:372.75px;font-size:13px;color:#16181d;letter-spacing:0.026px;-webkit-text-stroke:0.16px #fff;">Lookup</span>
<span class="t" id="t52" style="left:1120.7px;top:406.75px;font-size:13px;color:#16181d;letter-spacing:0.076px;-webkit-text-stroke:0.16px #f2f2f2;">Created time</span>
<span class="t" id="t53" style="left:1120.7px;top:440.75px;font-size:13px;color:#16181d;letter-spacing:0.257px;-webkit-text-stroke:0.16px #fff;">Last modified time</span>
<span class="t" id="t54" style="left:1120.7px;top:474.75px;font-size:13px;color:#16181d;letter-spacing:-0.031px;-webkit-text-stroke:0.16px #fff;">Created by</span>
<span class="t" id="t55" style="left:1120.7px;top:508.75px;font-size:13px;color:#16181d;letter-spacing:0.221px;-webkit-text-stroke:0.16px #fff;">Last modified by</span>
<span class="t" id="t56" style="left:1120.7px;top:542.75px;font-size:13px;color:#16181d;letter-spacing:0.260px;-webkit-text-stroke:0.16px #fff;">Autonumber</span>
<span class="t" id="t57" style="left:1120.7px;top:576.75px;font-size:13px;color:#16181d;letter-spacing:-0.280px;-webkit-text-stroke:0.16px #fff;">Barcode</span>
<span class="t" id="t58" style="left:1120.7px;top:610.75px;font-size:13px;color:#16181d;letter-spacing:0.128px;-webkit-text-stroke:0.16px #fff;">Button</span>
<span class="t" id="t59" style="left:1120.5px;top:667.75px;font-size:13px;color:#16181d;letter-spacing:-0.665px;-webkit-text-stroke:0.16px #fff;">AI</span>
<span class="t" id="t60" style="left:1378.5px;top:667.44px;font-size:11px;color:#1a6a9e;letter-spacing:-0.459px;">Team</span>
<span class="t" id="t61" style="left:1118.5px;top:725.75px;font-size:13px;color:#16181d;letter-spacing:0.233px;-webkit-text-stroke:0.16px #fff;">Add description</span>
<span class="t" id="t62" style="left:1399.5px;top:725.75px;font-size:13px;color:#16181d;letter-spacing:-0.412px;-webkit-text-stroke:0.16px #fff;">Cancel</span>
<span class="t" id="t63" style="left:1456px;top:388.75px;font-size:13px;color:#fff;letter-spacing:0.163px;">Created time</span>
<span class="t" id="t64" style="left:1456px;top:409.44px;font-size:11px;color:#d8d8d8;letter-spacing:0.170px;">See the date and time each record</span>
<span class="t" id="t65" style="left:1456px;top:425.44px;font-size:11px;color:#d8d8d8;letter-spacing:-0.067px;">was created.</span>
</div>
</body></html>
